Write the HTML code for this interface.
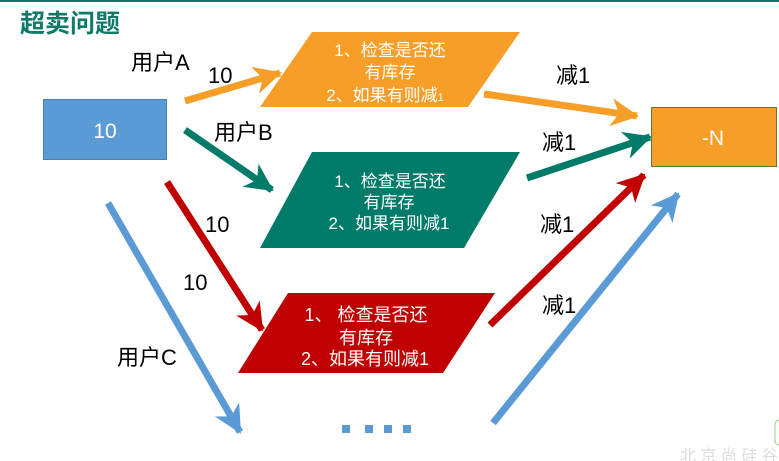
<!DOCTYPE html>
<html><head><meta charset="utf-8"><style>
html,body{margin:0;padding:0;background:#fff;width:779px;height:461px;overflow:hidden}
svg text{font-family:"Liberation Sans","Noto Sans CJK SC",sans-serif}
</style></head><body>
<svg width="779" height="461" viewBox="0 0 779 461" xmlns="http://www.w3.org/2000/svg">
<defs>
<marker id="mo" markerUnits="userSpaceOnUse" markerWidth="30" markerHeight="30" refX="26" refY="15" orient="auto" viewBox="0 0 30 30"><path d="M0,1 L28,15 L0,29 L8,15 z" fill="#f79e28"/></marker>
<marker id="mt" markerUnits="userSpaceOnUse" markerWidth="30" markerHeight="30" refX="26" refY="15" orient="auto" viewBox="0 0 30 30"><path d="M0,1 L28,15 L0,29 L8,15 z" fill="#017b69"/></marker>
<marker id="mr" markerUnits="userSpaceOnUse" markerWidth="30" markerHeight="30" refX="26" refY="15" orient="auto" viewBox="0 0 30 30"><path d="M0,1 L28,15 L0,29 L8,15 z" fill="#c00000"/></marker>
<marker id="mb" markerUnits="userSpaceOnUse" markerWidth="30" markerHeight="30" refX="26" refY="15" orient="auto" viewBox="0 0 30 30"><path d="M0,1 L28,15 L0,29 L8,15 z" fill="#5b9bd5"/></marker>
</defs>
<rect x="0" y="0" width="779" height="2" fill="#0e7a6a"/>
<text x="20" y="32" font-size="25" font-weight="bold" fill="#0e7a6a">超卖问题</text>

<rect x="43.5" y="99.5" width="123" height="60" fill="#5b9bd5" stroke="#4a7fb0"/>
<text x="105" y="138" font-size="21" fill="#fff" text-anchor="middle">10</text>

<rect x="651.5" y="107.5" width="125" height="59" fill="#f79e28" stroke="#5a7a30"/>
<text x="713" y="145" font-size="21" fill="#fff" text-anchor="middle">-N</text>

<polygon points="312,32 520,32 468,107 260,107" fill="#f79e28"/>
<polygon points="312,152 520,152 464,248 260,248" fill="#017b69"/>
<polygon points="288,293 495,293 443,373 238,373" fill="#c00000"/>

<g font-size="17" fill="#fff" text-anchor="middle">
<text x="390" y="56">1、检查是否还</text><text x="390" y="78">有库存</text><text x="385" y="101">2、如果有则减<tspan font-size="11">1</tspan></text>
<text x="390" y="187">1、检查是否还</text><text x="389" y="208">有库存</text><text x="389" y="229">2、如果有则减1</text>
<text x="366" y="321" font-size="18">1、 检查是否还</text><text x="366" y="344" font-size="18">有库存</text><text x="365" y="365" font-size="18">2、如果有则减1</text>
</g>

<g stroke-width="7" fill="none">
<line x1="185" y1="101" x2="280" y2="73" stroke="#f79e28" marker-end="url(#mo)"/>
<line x1="484" y1="94" x2="637" y2="116" stroke="#f79e28" marker-end="url(#mo)"/>
<line x1="185" y1="130" x2="272" y2="190" stroke="#017b69" marker-end="url(#mt)"/>
<line x1="527" y1="178" x2="650" y2="137" stroke="#017b69" marker-end="url(#mt)"/>
<line x1="167" y1="182" x2="262" y2="330" stroke="#c00000" marker-end="url(#mr)"/>
<line x1="490" y1="325" x2="644" y2="175" stroke="#c00000" marker-end="url(#mr)"/>
<line x1="108" y1="203" x2="240" y2="432" stroke="#5b9bd5" marker-end="url(#mb)"/>
<line x1="493" y1="423" x2="678" y2="194" stroke="#5b9bd5" marker-end="url(#mb)"/>
</g>

<g fill="#5b9bd5">
<rect x="342" y="425" width="8" height="8"/><rect x="365" y="425" width="8" height="8"/><rect x="384" y="425" width="8" height="8"/><rect x="403" y="425" width="8" height="8"/>
</g>

<g font-size="22" fill="#000">
<text x="131" y="70">用户A</text>
<text x="208" y="83">10</text>
<text x="214" y="140">用户B</text>
<text x="205" y="232">10</text>
<text x="183" y="290">10</text>
<text x="117" y="365">用户C</text>
<text x="556" y="83">减1</text>
<text x="542" y="150">减1</text>
<text x="540" y="232">减1</text>
<text x="542" y="313">减1</text>
</g>

<rect x="775" y="420" width="10" height="25" rx="4" fill="#fff" stroke="#8fd06f"/>
<text x="680" y="461" font-size="16" fill="#ddd">北 京 尚 硅 谷</text>
</svg>
</body></html>
